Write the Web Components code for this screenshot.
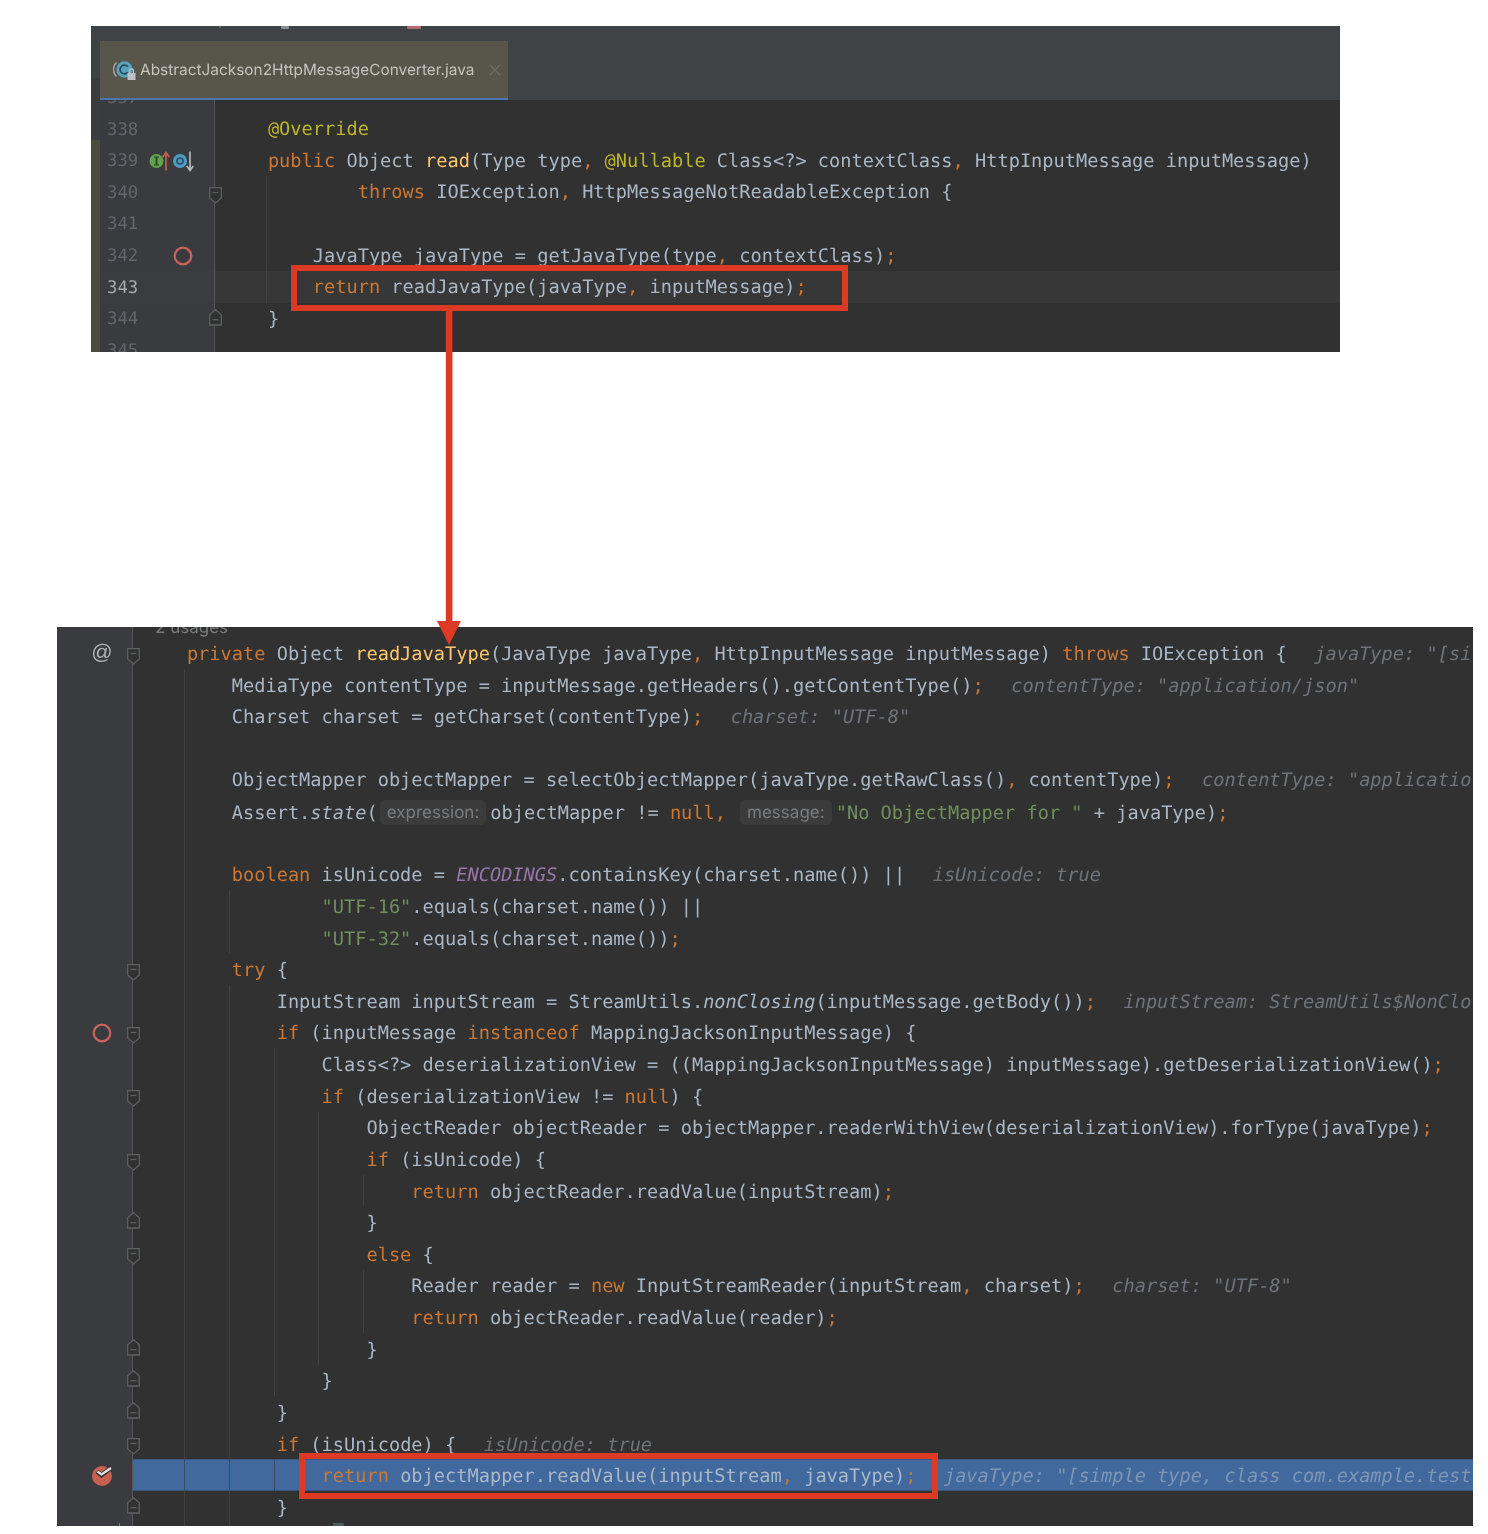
<!DOCTYPE html>
<html lang="en">
<head>
<meta charset="utf-8">
<title>Call chain</title>
<style>
  html, body { margin: 0; background: #fff; }
  body { font-family: "DejaVu Sans Mono", monospace; }
</style>
</head>
<body>
<ide-shot>
  <ide-panel slot="top" tab="AbstractJackson2HttpMessageConverter.java" style="--gw:115px;--pad:8px;--tx:1px;--panel-x:91px;--panel-w:1249px;--panel-h:326px;--lift:-18.4px">
    <clip-mark x="128" y="0" w="2" h="2" c="#6d7072"></clip-mark>
    <clip-mark x="190" y="0" w="8" h="3" c="#8d9092"></clip-mark>
    <clip-mark x="316" y="0" w="14" h="3" c="#b36a6a"></clip-mark>
    <code-line n="337"></code-line>
    <code-line n="338" code="    ‹a|@Override›"></code-line>
    <code-line n="339" mark="inherit" code="    ‹k|public› Object ‹f|read›(Type type, ‹a|@Nullable› Class<?> contextClass, HttpInputMessage inputMessage)"></code-line>
    <code-line n="340" fold="down" g="166" code="            ‹k|throws› IOException, HttpMessageNotReadableException {"></code-line>
    <code-line n="341" g="166"></code-line>
    <code-line n="342" mark="ring" style="--mx:83px" g="166" code="        JavaType javaType = getJavaType(type, contextClass);"></code-line>
    <code-line n="343" state="current" g="166" code="        ‹k|return› readJavaType(javaType, inputMessage);"></code-line>
    <code-line n="344" fold="up" code="    }"></code-line>
    <code-line n="345"></code-line>
  </ide-panel>

  <ide-panel slot="bottom" style="--gw:76px;--pad:9px;--tx:2.8px;--panel-x:57px;--panel-w:1416px;--panel-h:899px;--lift:-21.4px">
    <clip-mark x="62" y="896" w="1" h="3" c="#5f8f7a"></clip-mark>
    <clip-mark x="276" y="896" w="11" h="3" c="#4b5c5c"></clip-mark>
    <code-line code="‹u|2 usages›"></code-line>
    <code-line mark="at" fold="down" code="    ‹k|private› Object ‹f|readJavaType›(JavaType javaType, HttpInputMessage inputMessage) ‹k|throws› IOException {‹h|javaType: &quot;[si›"></code-line>
    <code-line g="127" code="        MediaType contentType = inputMessage.getHeaders().getContentType();‹h|contentType: &quot;application/json&quot;›"></code-line>
    <code-line g="127" code="        Charset charset = getCharset(contentType);‹h|charset: &quot;UTF-8&quot;›"></code-line>
    <code-line g="127"></code-line>
    <code-line g="127" code="        ObjectMapper objectMapper = selectObjectMapper(javaType.getRawClass(), contentType);‹h|contentType: &quot;applicatio›"></code-line>
    <code-line g="127" code="        Assert.‹i|state›(‹n|expression:›objectMapper != ‹k|null›,‹m|message:›‹s|&quot;No ObjectMapper for &quot;› + javaType);"></code-line>
    <code-line g="127"></code-line>
    <code-line g="127" code="        ‹k|boolean› isUnicode = ‹p|ENCODINGS›.containsKey(charset.name()) ||‹h|isUnicode: true›"></code-line>
    <code-line g="127 172" code="                ‹s|&quot;UTF-16&quot;›.equals(charset.name()) ||"></code-line>
    <code-line g="127 172" code="                ‹s|&quot;UTF-32&quot;›.equals(charset.name());"></code-line>
    <code-line g="127" fold="down" code="        ‹k|try› {"></code-line>
    <code-line g="127 172" code="            InputStream inputStream = StreamUtils.‹i|nonClosing›(inputMessage.getBody());‹h|inputStream: StreamUtils$NonClo›"></code-line>
    <code-line g="127 172" mark="ring" style="--mx:45px" fold="down" code="            ‹k|if› (inputMessage ‹k|instanceof› MappingJacksonInputMessage) {"></code-line>
    <code-line g="127 172 217" code="                Class<?> deserializationView = ((MappingJacksonInputMessage) inputMessage).getDeserializationView();"></code-line>
    <code-line g="127 172 217" fold="down" code="                ‹k|if› (deserializationView != ‹k|null›) {"></code-line>
    <code-line g="127 172 217 261" code="                    ObjectReader objectReader = objectMapper.readerWithView(deserializationView).forType(javaType);"></code-line>
    <code-line g="127 172 217 261" fold="down" code="                    ‹k|if› (isUnicode) {"></code-line>
    <code-line g="127 172 217 261 306" code="                        ‹k|return› objectReader.readValue(inputStream);"></code-line>
    <code-line g="127 172 217 261" fold="up" code="                    }"></code-line>
    <code-line g="127 172 217 261" fold="down" code="                    ‹k|else› {"></code-line>
    <code-line g="127 172 217 261 306" code="                        Reader reader = ‹k|new› InputStreamReader(inputStream, charset);‹h|charset: &quot;UTF-8&quot;›"></code-line>
    <code-line g="127 172 217 261 306" code="                        ‹k|return› objectReader.readValue(reader);"></code-line>
    <code-line g="127 172 217 261" fold="up" code="                    }"></code-line>
    <code-line g="127 172 217" fold="up" code="                }"></code-line>
    <code-line g="127 172" fold="up" code="            }"></code-line>
    <code-line g="127 172" fold="down" code="            ‹k|if› (isUnicode) {‹h|isUnicode: true›"></code-line>
    <code-line g="127 172 217" mark="hit" state="selected" code="                ‹k|return› objectMapper.readValue(inputStream, javaType);‹h|javaType: &quot;[simple type, class com.example.test›"></code-line>
    <code-line g="127 172" fold="up" code="            }"></code-line>
    <code-line g="127 172"></code-line>
  </ide-panel>

  <red-box slot="over" x="291" y="265" w="557" h="46"></red-box>
  <red-box slot="over" x="299" y="1453" w="638.5" h="46"></red-box>
  <flow-arrow slot="over"></flow-arrow>
</ide-shot>

<script>
const esc = s => s.replace(/&quot;/g, '"').replace(/&/g, '&amp;').replace(/</g, '&lt;').replace(/>/g, '&gt;');
function renderCode(src) {
  let out = '', last = 0;
  const plain = t => t.split(/([,;])/).map((p, i) => i % 2 ? `<span class="k">${p}</span>` : esc(p)).join('');
  for (const m of src.matchAll(/‹(\w)\|([^›]*)›/g)) {
    out += plain(src.slice(last, m.index));
    out += `<span class="${m[1]}">${esc(m[2])}</span>`;
    last = m.index + m[0].length;
  }
  return out + plain(src.slice(last));
}

const ICONS = {
  at: `<span class="at">@</span>`,
  ring: `<svg class="ic" width="22" height="22" viewBox="0 0 22 22"><circle cx="11" cy="11" r="8.3" fill="none" stroke="#c9645b" stroke-width="2.2"/></svg>`,
  hit: `<svg class="ic" width="26" height="26" viewBox="0 0 26 26"><circle cx="13" cy="14" r="10" fill="#c8604f"/><path d="M8 9.5l4.5 3.5L22.5 5.5" fill="none" stroke="#323336" stroke-width="4.6"/><path d="M8.5 9.5l4 3L22 6" fill="none" stroke="#e6e6e6" stroke-width="2.2"/></svg>`,
  inherit: `<svg class="inh" width="47" height="22" viewBox="0 0 47 22"><circle cx="9" cy="11" r="7" fill="#62a14e"/><rect x="8" y="7" width="2" height="8" fill="#2f4a2a"/><rect x="6.5" y="6.5" width="5" height="1.2" fill="#2f4a2a"/><rect x="6.5" y="14.3" width="5" height="1.2" fill="#2f4a2a"/><path d="M18.5 20.5V3M15.2 7L18.5 2.5 21.8 7" fill="none" stroke="#c75c50" stroke-width="1.7"/><circle cx="32.5" cy="11" r="7" fill="#4f9cc2"/><circle cx="32.5" cy="11" r="3" fill="none" stroke="#2b4a5c" stroke-width="1.6"/><path d="M42.5 1.5v19M39.3 16L42.5 20.5 45.7 16" fill="none" stroke="#b6b8ba" stroke-width="1.7"/></svg>`
};
const FOLD = {
  down: `<path d="M.7.7H12.3V11L6.5 16 .7 11Z" /><path d="M3.6 5.5H9.4"/>`,
  up: `<path d="M.7 16H12.3V5.7L6.5 .7 .7 5.7Z"/><path d="M3.6 10.7H9.4"/>`
};

class CodeLine extends HTMLElement {
  connectedCallback() {
    const a = n => this.getAttribute(n);
    const root = this.attachShadow({ mode: 'open' });
    const fold = a('fold');
    const guides = (a('g') || '').split(' ').filter(Boolean)
      .map(x => `<i class="guide" style="left:${x}px"></i>`).join('');
    root.innerHTML = `
      <style>
        :host { display:flex; height:31.63px; position:relative; white-space:pre; }
        .gut { flex:none; width:var(--gw); box-sizing:border-box; height:100%; background:#393b3f; border-right:1.5px solid #55575a;
               position:relative; display:flex; align-items:center; padding:var(--tx) 0 0 7px; color:#63666a; font-size:17.3px; }
        .code { flex:1; min-width:0; overflow:hidden; display:flex; align-items:center; padding:var(--tx) 0 0 var(--pad); box-sizing:border-box; font-size:18.65px; color:#a9b7c6; }
        .line { white-space:pre; }
        :host([state=current]) .code { background:#373737; }
        :host([state=current]) .gut { background:#3a3c40; color:#a8a8a8; }
        :host([state=selected]) .code { background:#41699e; box-shadow: inset 0 1px #3a5a85, inset 0 -1px #37557d; }
        .guide { position:absolute; top:0; bottom:0; width:1px; background:#414141; }
        :host([state=selected]) .guide { background:#3a4a60; }
        .k { color:#cc7832; } .f { color:#ffc66d; } .a { color:#bbb529; } .s { color:#6f8f5d; }
        .i { font-style:italic; } .p { color:#9876aa; font-style:italic; }
        .h { color:#6f747a; font-style:italic; margin-left:27.5px; }
        :host([state=selected]) .h { color:#7d96b6; }
        .n, .m { display:inline-block; background:#3b3b3b; color:#797b7d; border-radius:5px; font:17.05px/25px Inter, sans-serif; padding:0 7px; margin:0 4px 0 2px; vertical-align:1px; }
        .m { margin-left:14px; }
        .u { display:inline-block; font:17px Inter, sans-serif; color:#7a7c7e; margin-left:13px; transform:translateY(5px); }
        .ic, .at, .inh { position:absolute; top:50%; left:var(--mx,45px); transform:translate(-50%,-50%); }
        .inh { left:71px; }
        .at { font:21px "Liberation Sans", sans-serif; color:#b0b2b4; top:50%; }
        .fold { position:absolute; right:-7.5px; fill:#313131; stroke:#5e6062; stroke-width:1.3; z-index:1; }
        .fold.down { top:10.3px; } .fold.up { top:5.8px; }
      </style>
      <div class="gut">${a('n') || ''}${ICONS[a('mark')] || ''}${fold ? `<svg class="fold ${fold}" width="13" height="17" viewBox="0 0 13 17">${FOLD[fold]}</svg>` : ''}</div>
      <div class="code"><span class="line">${renderCode(a('code') || '')}</span></div>
      ${guides}`;
  }
}

class IdePanel extends HTMLElement {
  connectedCallback() {
    const tab = this.getAttribute('tab');
    const root = this.attachShadow({ mode: 'open' });
    root.innerHTML = `
      <style>
        :host { display:block; position:relative; overflow:hidden; margin-left:var(--panel-x); width:var(--panel-w); height:var(--panel-h);
                background:#313131; font-family:"DejaVu Sans Mono", monospace; text-rendering:geometricPrecision; filter:blur(.45px); }
        .frame { display:flex; height:100%; }
        .strip { flex:none; width:9px; background:linear-gradient(#3f4346 0 15px, #3d4245 15px 52px, #3a3d3f 52px 114px, #4b4a3d 114px); }
        .main { flex:1; min-width:0; display:flex; flex-direction:column; }
        .bar { flex:none; height:74px; box-sizing:border-box; padding-top:15px; background:#3f4346; }
        .tab { width:408px; height:59px; box-sizing:border-box; background:#58564a; border-bottom:2.5px solid #4a78ae; display:flex; align-items:center;
               gap:4px; padding-left:13px; color:#c3c3bd; font:15.42px Inter, sans-serif; }
        .x { margin-left:11px; flex:none; }
        .body { flex:1; min-height:0; overflow:hidden; }
        .lines { margin-top:var(--lift); }
      </style>
      <div class="frame">
        ${tab ? '<div class="strip"></div>' : ''}
        <div class="main">
          ${tab ? `<div class="bar"><div class="tab">
            <svg width="23" height="23" viewBox="0 0 23 23" style="flex:none"><path d="M3.5 4.5A9.5 9.5 0 0 0 3.5 18.5" fill="none" stroke="#9fa3a5" stroke-width="1.5"/><circle cx="11.5" cy="11.5" r="8.2" fill="#57a3bd"/><path d="M14.8 8.6A4.4 4.4 0 1 0 14.8 14.4" fill="none" stroke="#2c4a58" stroke-width="1.8"/><rect x="14.5" y="15" width="8" height="7" fill="#bcc1c5"/><path d="M16.5 15v-2.2a2 2 0 0 1 4 0V15" fill="none" stroke="#bcc1c5" stroke-width="1.3"/></svg>
            <span>${tab}</span>
            <svg class="x" width="12" height="12" viewBox="0 0 12 12"><path d="M1 1l10 10M11 1L1 11" stroke="#6f6e66" stroke-width="1.1"/></svg>
          </div></div>` : ''}
          <div class="body"><div class="lines"><slot></slot></div></div>
        </div>
      </div>`;
  }
}

class ClipMark extends HTMLElement {
  connectedCallback() {
    const a = n => this.getAttribute(n);
    this.attachShadow({ mode: 'open' }).innerHTML =
      `<style>:host{display:block;position:absolute;left:${a('x')}px;top:${a('y')}px;width:${a('w')}px;height:${a('h')}px;background:${a('c')};z-index:2;border-radius:1px}</style>`;
  }
}

class RedBox extends HTMLElement {
  connectedCallback() {
    const a = n => this.getAttribute(n);
    this.attachShadow({ mode: 'open' }).innerHTML =
      `<style>:host{display:block;position:absolute;box-sizing:border-box;left:${a('x')}px;top:${a('y')}px;width:${a('w')}px;height:${a('h')}px;border:6.7px solid #dc3a24}</style>`;
  }
}

class FlowArrow extends HTMLElement {
  connectedCallback() {
    this.attachShadow({ mode: 'open' }).innerHTML =
      `<style>:host{display:block;position:absolute;left:0;top:0}svg{display:block}</style>
       <svg width="1488" height="700" viewBox="0 0 1488 700"><rect x="445.8" y="310" width="6.6" height="315" fill="#dc3a24"/><path d="M437 621H461L449 645Z" fill="#dc3a24"/></svg>`;
  }
}

class IdeShot extends HTMLElement {
  connectedCallback() {
    this.attachShadow({ mode: 'open' }).innerHTML = `
      <style>
        :host { display:block; position:relative; width:1488px; height:1534px; overflow:hidden; background:#fff; }
        .stack { display:flex; flex-direction:column; padding-top:26px; gap:275px; }
      </style>
      <div class="stack"><slot name="top"></slot><slot name="bottom"></slot></div>
      <slot name="over"></slot>`;
  }
}

customElements.define('code-line', CodeLine);
customElements.define('ide-panel', IdePanel);
customElements.define('clip-mark', ClipMark);
customElements.define('red-box', RedBox);
customElements.define('flow-arrow', FlowArrow);
customElements.define('ide-shot', IdeShot);
</script>
</body>
</html>
